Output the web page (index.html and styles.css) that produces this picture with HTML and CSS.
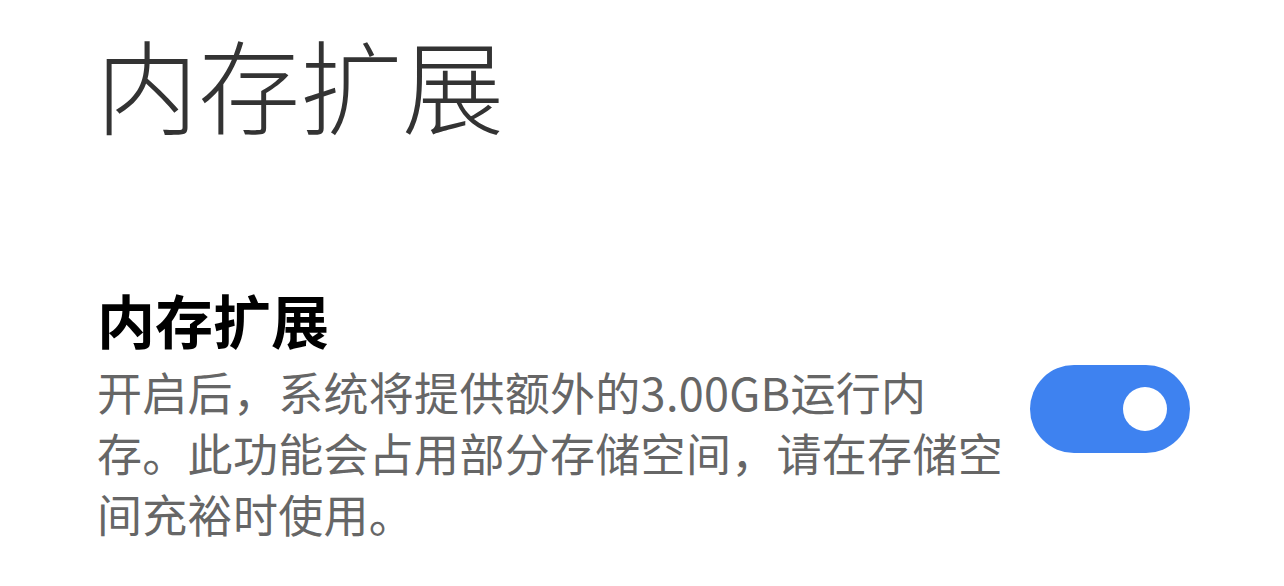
FILE: index.html
```html
<!DOCTYPE html>
<html lang="zh-CN">
<head>
<meta charset="utf-8">
<title>内存扩展</title>
<link rel="stylesheet" href="styles.css">
</head>
<body>
  <main class="page">
    <h1 class="page-title">内存扩展</h1>
    <section class="setting-row">
      <div class="setting-text">
        <h2 class="setting-name">内存扩展</h2>
        <p class="setting-desc">开启后，系统将提供额外的3.00GB运行内存。此功能会占用部分存储空间，请在存储空间充裕时使用。</p>
      </div>
      <div class="switch is-on" role="switch" aria-checked="true">
        <span class="switch-knob"></span>
      </div>
    </section>
  </main>
</body>
</html>
```

FILE: styles.css
```css
html, body {
  margin: 0;
  padding: 0;
  background: #ffffff;
}

.page {
  font-family: "Noto Sans CJK SC", "Noto Sans", sans-serif;
  padding: 32px 94px 0 96px;
}

.page-title {
  margin: 0;
  font-size: 102px;
  line-height: 102px;
  font-weight: 300;
  color: #333333;
  letter-spacing: 0;
}

.setting-row {
  display: flex;
  align-items: center;
  justify-content: space-between;
  margin-top: 156px;
}

.setting-text {
  width: 910px;
  padding-left: 1px;
}

.setting-name {
  margin: 0;
  font-size: 58px;
  line-height: 58px;
  font-weight: 700;
  color: #000000;
}

.setting-desc {
  margin: 13px 0 0;
  font-size: 45px;
  line-height: 61px;
  font-weight: 400;
  color: #666666;
  letter-spacing: 0.3px;
}

.switch {
  width: 160px;
  height: 88px;
  border-radius: 44px;
  background: #3e82f0;
  display: flex;
  align-items: center;
  justify-content: flex-end;
  padding-right: 23px;
  box-sizing: border-box;
  margin-bottom: 16px;
  flex-shrink: 0;
}

.switch-knob {
  width: 44px;
  height: 44px;
  border-radius: 50%;
  background: #ffffff;
}
```
